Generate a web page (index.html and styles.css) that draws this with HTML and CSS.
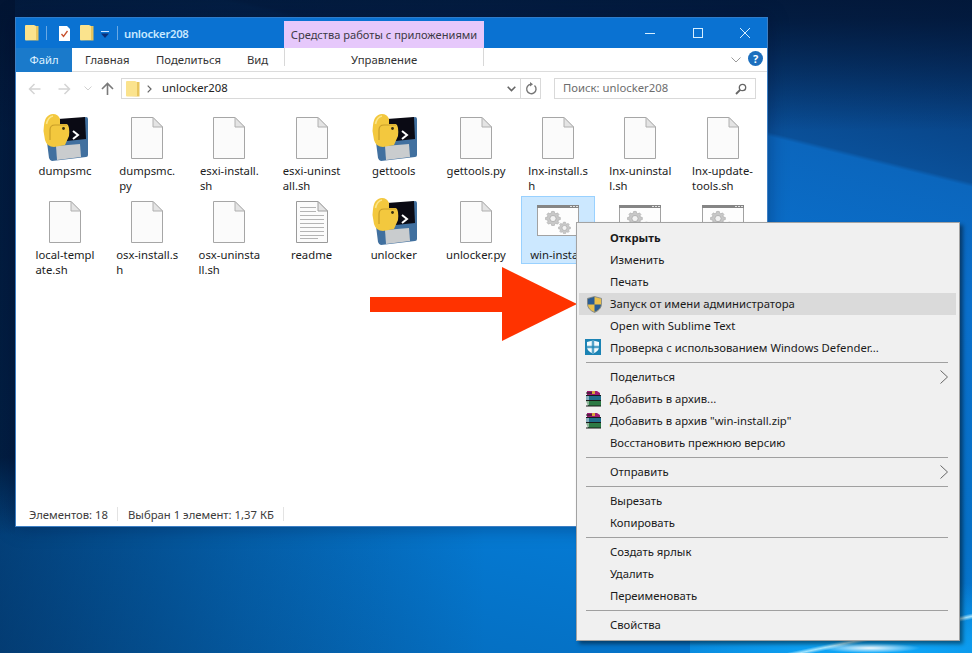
FILE: index.html
```html
<!DOCTYPE html>
<html lang="ru">
<head>
<meta charset="utf-8">
<title>unlocker208</title>
<link rel="stylesheet" href="styles.css">
</head>
<body>
<svg class="defs" width="0" height="0">
  <defs>
    <symbol id="doc" viewBox="0 0 32 42">
      <path d="M.5.5H22L31.5 10V41.5H.5Z" fill="#fbfbfb" stroke="#a6a6a6"/>
      <path d="M22 .5V10H31.5Z" fill="#e4e4e4" stroke="#b0b0b0" stroke-linejoin="round"/>
    </symbol>
    <symbol id="txt" viewBox="0 0 32 42">
      <path d="M.5.5H22L31.5 10V41.5H.5Z" fill="#fbfbfb" stroke="#9a9a9a"/>
      <path d="M22 .5V10H31.5Z" fill="#e4e4e4" stroke="#a0a0a0"/>
      <path d="M4 6.5H20M4 10.5H20M4 14.5H28M4 18.5H28M4 22.5H28M4 26.5H28M4 30.5H28M4 34.5H28M4 37.5H22" stroke="#b4b4b4"/>
    </symbol>
    <symbol id="py" viewBox="0 0 46 47">
      <path d="M3 12L44 3Q46 3 46 5L46 41Q46 43 44 43L10 47Q8 47 7 44Z" fill="#41709f"/>
      <path d="M16 5L43 3 44 25 15 28Z" fill="#0a0a14"/>
      <path d="M14 32L38 30 39 43 15 46Z" fill="#c9ccce"/>
      <path d="M1.500 17Q2 7 4 4 7 0 11 0 16 0 18 5L18 10 25 10Q28 12 27 22L23 31 12 33Q5 33 3 26Z" fill="#f3c83e"/>
      <path d="M8 26V16Q8 11 13 11H25" fill="none" stroke="#c99e28" stroke-width="1.200"/>
      <path d="M4.500 10Q6 3 11 2" fill="none" stroke="#fbe58a" stroke-width="1.600"/>
      <circle cx="21.500" cy="14.500" r="1.400" fill="#3a3010"/>
      <path d="M31 17L36 21 31 25" fill="none" stroke="#fff" stroke-width="2"/>
    </symbol>
    <symbol id="gear" viewBox="0 0 24 24">
      <path d="M12 2l2 .3.6 2.6 1.8.8 2.3-1.4 2.2 2.3-1.4 2.2.7 1.8 2.8.6v3.2l-2.8.6-.7 1.8 1.4 2.2-2.2 2.3-2.3-1.4-1.8.8-.6 2.6h-4l-.6-2.6-1.8-.8-2.3 1.4-2.2-2.3 1.4-2.2-.7-1.8L.8 14.4v-3.2l2.8-.6.7-1.8L2.9 6.6l2.2-2.3 2.3 1.4 1.8-.8.6-2.6Z" fill="#c8c8c8" stroke="#a0a0a0" stroke-width=".8"/>
      <circle cx="12" cy="12.800" r="4.600" fill="#f2f2f2" stroke="#a0a0a0"/>
    </symbol>
    <symbol id="cmd" viewBox="0 0 42 31">
      <rect x=".5" y=".5" width="41" height="30" fill="#fdfdfd" stroke="#a2a2a2"/>
      <rect width="42" height="3" fill="#858585"/>
      <path d="M33 1h2v1h-2zM36 1h2v1h-2zM39 1h2v1h-2z" fill="#e2e2e2"/>
      <use href="#gear" x="8" y="5" width="16" height="16"/>
      <use href="#gear" x="21" y="16" width="13" height="13"/>
    </symbol>
    <symbol id="folder" viewBox="0 0 14 16">
      <path d="M0 1Q0 0 1 0H9L11 1V15L1 15.500Q0 15.500 0 14.500Z" fill="#fbe38d"/>
      <path d="M11 1H13.500V15.500H1L11 15Z" fill="#e8c55d"/>
    </symbol>
    <symbol id="rar" viewBox="0 0 17 17">
      <path d="M2 1H12L15 3 15 6H2Z" fill="#9c1a72"/>
      <path d="M1 6H16V11H1Z" fill="#1f6d8a"/>
      <path d="M1 11H16V16H3Z" fill="#2d7a45"/>
      <path d="M1 5.500H16M1 10.500H16M1 16H16M1 3H9" stroke="#1a1a1a" stroke-width="1"/>
      <path d="M7 1H10V4H7Z" fill="#d9a53a"/>
      <path d="M1 7H4M1 9H4M1 12H4M1 14H4" stroke="#eee"/>
    </symbol>
    <symbol id="chev" viewBox="0 0 8 14">
      <path d="M.5.5L7.500 7 .5 13.500" fill="none" stroke="#666"/>
    </symbol>
  </defs>
</svg>

<div class="glow"></div>

<section class="window">
  <header class="titlebar">
    <div class="quick">
      <svg class="qa-folder" width="14" height="16"><use href="#folder"/></svg>
      <span class="qa-sep"></span>
      <svg class="qa-check" width="13" height="15" viewBox="0 0 13 15"><path d="M1 0H9L12 3V15H1Z" fill="#fff"/><path d="M3.500 8L5.500 10.500 9.500 5" fill="none" stroke="#c8502c" stroke-width="1.300"/></svg>
      <svg class="qa-folder" width="14" height="16"><use href="#folder"/></svg>
      <svg class="qa-drop" width="8" height="7" viewBox="0 0 8 7"><path d="M0 0H8V1H0Z" fill="#cfe6ff"/><path d="M0 2.500H8L4 7Z" fill="#0b2f78"/></svg>
      <span class="qa-sep"></span>
      <span class="title">unlocker208</span>
    </div>
    <div class="context-tab">Средства работы с приложениями</div>
    <div class="controls">
      <svg width="12" height="12" viewBox="0 0 12 12"><path d="M1 6.500H11" stroke="#d7efff"/></svg>
      <svg width="12" height="12" viewBox="0 0 12 12"><rect x="1.500" y="1.500" width="9" height="9" fill="none" stroke="#d7efff"/></svg>
      <svg width="12" height="12" viewBox="0 0 12 12"><path d="M1 1L11 11M11 1L1 11" stroke="#d7efff"/></svg>
    </div>
  </header>

  <nav class="ribbon">
    <span class="tab tab-file">Файл</span>
    <span class="tab tab-home">Главная</span>
    <span class="tab tab-share">Поделиться</span>
    <span class="tab tab-view">Вид</span>
    <span class="tab tab-manage">Управление</span>
    <svg class="rib-chev" width="10" height="6" viewBox="0 0 10 6"><path d="M.5.5L5 5 9.500.5" fill="none" stroke="#9a9a9a"/></svg>
    <span class="help">?</span>
  </nav>

  <div class="navbar">
    <svg class="nav-ic" width="13" height="12" viewBox="0 0 13 12"><path d="M12.500 6H2M6.500 1L1.500 6 6.500 11" fill="none" stroke="#d4d4d4" stroke-width="1.500"/></svg>
    <svg class="nav-ic nav-fwd" width="13" height="12" viewBox="0 0 13 12"><path d="M.5 6H11M6.500 1L11.500 6 6.500 11" fill="none" stroke="#d4d4d4" stroke-width="1.500"/></svg>
    <svg class="nav-ic nav-down" width="8" height="5" viewBox="0 0 8 5"><path d="M.5.5L4 4 7.500.5" fill="none" stroke="#d0d0d0"/></svg>
    <svg class="nav-ic nav-up" width="13" height="13" viewBox="0 0 13 13"><path d="M6.500 13V2M1 7L6.500 1.500 12 7" fill="none" stroke="#7a7a7a" stroke-width="1.600"/></svg>
    <div class="address">
      <svg class="addr-folder" width="14" height="16"><use href="#folder"/></svg>
      <svg class="addr-chev" width="5" height="8" viewBox="0 0 5 8"><path d="M.7.7L4 4 .7 7.300" fill="none" stroke="#666" stroke-width="1.200"/></svg>
      <span class="addr-text">unlocker208</span>
      <svg class="addr-down" width="9" height="6" viewBox="0 0 9 6"><path d="M.7.7L4.500 4.500 8.300.7" fill="none" stroke="#666" stroke-width="1.600"/></svg>
      <span class="addr-refresh">
        <svg width="12" height="13" viewBox="0 0 12 13"><path d="M9.500 3.500A4.700 4.700 0 1 1 6 2.300" fill="none" stroke="#777" stroke-width="1.400"/><path d="M5 0L8 2.300 5 4.600Z" fill="#777"/></svg>
      </span>
    </div>
    <div class="search">
      <span class="search-text">Поиск: unlocker208</span>
      <svg width="12" height="12" viewBox="0 0 12 12"><circle cx="7.500" cy="4.500" r="3.200" fill="none" stroke="#666" stroke-width="1.300"/><path d="M5 7L1 11" stroke="#666" stroke-width="1.800"/></svg>
    </div>
  </div>

  <main class="files">
    <div class="file"><svg class="ic-py"><use href="#py"/></svg><span class="name">dumpsmc</span></div>
    <div class="file"><svg class="ic-doc"><use href="#doc"/></svg><span class="name">dumpsmc.<br>py</span></div>
    <div class="file"><svg class="ic-doc"><use href="#doc"/></svg><span class="name">esxi-install.<br>sh</span></div>
    <div class="file"><svg class="ic-doc"><use href="#doc"/></svg><span class="name">esxi-uninst<br>all.sh</span></div>
    <div class="file"><svg class="ic-py"><use href="#py"/></svg><span class="name">gettools</span></div>
    <div class="file"><svg class="ic-doc"><use href="#doc"/></svg><span class="name">gettools.py</span></div>
    <div class="file"><svg class="ic-doc"><use href="#doc"/></svg><span class="name">lnx-install.s<br>h</span></div>
    <div class="file"><svg class="ic-doc"><use href="#doc"/></svg><span class="name">lnx-uninstal<br>l.sh</span></div>
    <div class="file"><svg class="ic-doc"><use href="#doc"/></svg><span class="name">lnx-update-<br>tools.sh</span></div>
    <div class="file"><svg class="ic-doc"><use href="#doc"/></svg><span class="name">local-templ<br>ate.sh</span></div>
    <div class="file"><svg class="ic-doc"><use href="#doc"/></svg><span class="name">osx-install.s<br>h</span></div>
    <div class="file"><svg class="ic-doc"><use href="#doc"/></svg><span class="name">osx-uninsta<br>ll.sh</span></div>
    <div class="file"><svg class="ic-doc"><use href="#txt"/></svg><span class="name">readme</span></div>
    <div class="file"><svg class="ic-py"><use href="#py"/></svg><span class="name">unlocker</span></div>
    <div class="file"><svg class="ic-doc"><use href="#doc"/></svg><span class="name">unlocker.py</span></div>
    <div class="file selected"><svg class="ic-cmd"><use href="#cmd"/></svg><span class="name clipped">win-install</span></div>
    <div class="file"><svg class="ic-cmd"><use href="#cmd"/></svg></div>
    <div class="file"><svg class="ic-cmd"><use href="#cmd"/></svg></div>
  </main>

  <footer class="status">
    <span class="st-count">Элементов: 18</span>
    <span class="st-sep"></span>
    <span class="st-sel">Выбран 1 элемент: 1,37 КБ</span>
    <span class="st-sep"></span>
  </footer>
</section>

<div class="arrow">
  <span class="arrow-bar"></span>
  <span class="arrow-head"></span>
</div>

<div class="menu">
  <div class="item bold">Открыть</div>
  <div class="item">Изменить</div>
  <div class="item">Печать</div>
  <div class="item hover">
    <svg class="item-ic shield" width="15" height="17" viewBox="0 0 16 18"><path d="M8 .5L15.500 2.500V9Q15 14.500 8 17.500 1 14.500.5 9V2.500Z" fill="#e9c04e" stroke="#6f7a86" stroke-width=".8"/><path d="M8 .8V9H.9V2.800ZM8 9H15.100Q14.500 14.200 8 17.100Z" fill="#2a5c94"/></svg>
    Запуск от имени администратора
  </div>
  <div class="item">Open with Sublime Text</div>
  <div class="item">
    <svg class="item-ic" width="16" height="16" viewBox="0 0 16 16"><rect width="16" height="16" fill="#1b83b4"/><path d="M8 1.500L14 3V8Q14 12 8 14.800 2 12 2 8V3Z" fill="#f4fbfd"/><path d="M7.300 1.500V14.500M8.700 1.500V14.500M2 7.300H14M2 8.700H14" stroke="#1b83b4" stroke-width=".9"/></svg>
    Проверка с использованием Windows Defender...
  </div>
  <hr class="sep">
  <div class="item">Поделиться<svg class="sub" width="8" height="14"><use href="#chev"/></svg></div>
  <div class="item"><svg class="item-ic" width="17" height="17"><use href="#rar"/></svg>Добавить в архив...</div>
  <div class="item"><svg class="item-ic" width="17" height="17"><use href="#rar"/></svg>Добавить в архив "win-install.zip"</div>
  <div class="item">Восстановить прежнюю версию</div>
  <hr class="sep">
  <div class="item">Отправить<svg class="sub" width="8" height="14"><use href="#chev"/></svg></div>
  <hr class="sep">
  <div class="item">Вырезать</div>
  <div class="item">Копировать</div>
  <hr class="sep">
  <div class="item">Создать ярлык</div>
  <div class="item">Удалить</div>
  <div class="item">Переименовать</div>
  <hr class="sep">
  <div class="item">Свойства</div>
</div>
</body>
</html>
```
FILE: styles.css
```css
* { box-sizing: border-box; }
html, body { margin: 0; height: 100%; }
body {
  width: 972px;
  height: 653px;
  overflow: hidden;
  position: relative;
  font: 12px/15px "Noto Sans", "Open Sans", sans-serif;
  color: #1c1c1c;
  background:
    linear-gradient(180deg, rgba(2, 20, 50, .85) 0, rgba(2, 20, 50, .8) 18px, rgba(2, 20, 50, 0) 130px),
    linear-gradient(180deg, rgba(2, 20, 50, .85) 0, rgba(2, 20, 50, .8) 70%, rgba(2, 20, 50, 0) 82%) 0 0 / 15px 100% no-repeat,
    linear-gradient(90deg, rgba(2, 24, 60, .55) 0, rgba(2, 24, 60, .25) 25%, rgba(2, 24, 60, 0) 50%),
    linear-gradient(194deg, #052f68 0, #0a5099 20.4%, #0b66bd 20.9%, #0a6fcb 34%, #0670c6 60%, #0579d2 72%, #0568b6 100%);
}
.defs { position: absolute; }

.glow {
  position: absolute;
  left: 690px;
  top: 560px;
  width: 282px;
  height: 93px;
  background:
    radial-gradient(ellipse 50px 5px at 180px 88px, rgba(255, 255, 255, .95), rgba(150, 225, 255, 0)),
    linear-gradient(168deg, rgba(190, 240, 255, 0) 74%, rgba(190, 240, 255, .85) 76%, rgba(190, 240, 255, 0) 78%),
    radial-gradient(ellipse 320px 70px at 180px 90px, rgba(15, 170, 250, 1), rgba(15, 170, 250, 0));
}

/* Window */
.window {
  position: absolute;
  left: 15px;
  top: 17px;
  width: 753px;
  height: 510px;
  background: #fff;
  border: 1px solid #3d7fc4;
  border-top-color: #2f7dcb;
  box-shadow: 0 0 18px rgba(0, 10, 40, .35);
  display: flex;
  flex-direction: column;
}
.titlebar {
  height: 30px;
  flex: none;
  background: #0a72d2;
  display: flex;
  align-items: flex-end;
}
.quick {
  width: 268px;
  height: 30px;
  padding-left: 9px;
  display: flex;
  align-items: center;
}
.qa-sep { width: 1px; height: 14px; background: #6aa9e4; }
.quick .qa-sep:nth-of-type(1) { margin: 0 11px 0 7px; }
.qa-check { margin-right: 9px; }
.qa-drop { margin: 2px 8px 0 7px; }
.title { margin-left: 6px; color: #c7e8ff; font-size: 11.3px; font-weight: 600; letter-spacing: -.3px; }
.context-tab {
  width: 200px;
  height: 27px;
  background: #e6c8fb;
  color: #3d3a45;
  font-size: 11.1px;
  line-height: 27px;
  text-align: center;
  white-space: nowrap;
}
.controls {
  flex: 1;
  height: 30px;
  padding: 0 16px 0 160px;
  display: flex;
  align-items: center;
  justify-content: space-between;
}

.ribbon {
  height: 24px;
  flex: none;
  border-bottom: 1px solid #dcdcdc;
  display: flex;
  align-items: stretch;
  position: relative;
  font-size: 11.3px;
  color: #333;
}
.tab { line-height: 23px; white-space: nowrap; }
.tab-file { width: 56px; height: 24px; margin-bottom: -1px; background: #1a7acb; color: #dff1ff; text-align: center; }
.tab-home { margin-left: 13px; width: 71px; }
.tab-share { width: 91px; }
.tab-view { width: 37px; }
.tab-manage {
  width: 200px;
  text-align: center;
  height: 18px;
  border-left: 1px solid #d8d8d8;
  border-right: 1px solid #d8d8d8;
}
.rib-chev { margin: 9px 0 0 247px; }
.help {
  width: 15px;
  height: 15px;
  margin: 3px 0 0 7px;
  border-radius: 50%;
  background: #1c6fbe;
  color: #fff;
  font: 700 11px/15px "Noto Sans", sans-serif;
  text-align: center;
}

.navbar {
  height: 36px;
  flex: none;
  padding: 6px 11px 9px 12px;
  display: flex;
  align-items: center;
}
.nav-fwd { margin-left: 17px; }
.nav-down { margin-left: 13px; }
.nav-up { margin-left: 9px; }
.address {
  width: 420px;
  height: 21px;
  margin-left: 7px;
  border: 1px solid #d9d9d9;
  display: flex;
  align-items: center;
  padding-left: 4px;
}
.addr-chev { margin-left: 7px; }
.addr-text { margin-left: 10px; flex: 1; color: #222; font-size: 11.3px; padding-bottom: 2px; }
.addr-down { margin-right: 4px; }
.addr-refresh {
  width: 20px;
  height: 19px;
  border-left: 1px solid #d9d9d9;
  display: flex;
  align-items: center;
  justify-content: center;
}
.search {
  width: 202px;
  height: 21px;
  margin-left: 13px;
  border: 1px solid #d9d9d9;
  padding: 0 8px;
  display: flex;
  align-items: center;
  justify-content: space-between;
  color: #6d6d6d;
  font-size: 11.3px;
}
.search-text { padding-bottom: 2px; }

.files {
  flex: 1;
  padding: 4px 0 0 12px;
  display: grid;
  grid-template-columns: repeat(9, 74px);
  grid-auto-rows: 68px;
  column-gap: 8.2px;
  row-gap: 16px;
  align-content: start;
}
.file {
  border: 1px solid transparent;
  display: flex;
  flex-direction: column;
  align-items: center;
}
.file svg { flex: none; }
.ic-doc { width: 32px; height: 42px; margin: 4px 0 4px; }
.ic-py { width: 46px; height: 47px; margin: 1px 0 2px; }
.ic-cmd { width: 42px; height: 31px; margin: 8px 0 11px; }
.name { font-size: 11.3px; line-height: 15px; text-align: left; white-space: nowrap; }
.clipped { align-self: flex-start; width: 46px; margin-left: 8px; overflow: hidden; }
.selected { background: #cce8ff; border-color: #99d1ff; }

.status {
  height: 24px;
  flex: none;
  padding-left: 13px;
  display: flex;
  align-items: center;
  color: #3c3c3c;
  font-size: 11.3px;
}
.st-sep { width: 1px; height: 14px; background: #e3e3e3; }
.st-count { width: 88px; }
.st-sel { width: 155px; margin-left: 10px; }

/* Annotation arrow */
.arrow {
  position: absolute;
  left: 370px;
  top: 267px;
  display: flex;
  align-items: center;
}
.arrow-bar { width: 132px; height: 15px; background: #ff3300; }
.arrow-head {
  width: 0;
  height: 0;
  border-left: 75px solid #ff3300;
  border-top: 37.5px solid transparent;
  border-bottom: 37.5px solid transparent;
}

/* Context menu */
.menu {
  position: absolute;
  left: 576px;
  top: 222px;
  width: 384px;
  height: 419px;
  padding: 4px 3px 4px 2px;
  background: #f0f0f0;
  border: 1px solid #a3a3a3;
  box-shadow: 3px 3px 4px rgba(0, 0, 0, .45);
}
.item {
  height: 22px;
  padding-left: 31px;
  position: relative;
  line-height: 21px;
  font-size: 11.3px;
  color: #1a1a1a;
  white-space: nowrap;
}
.bold { font-weight: 700; }
.hover { background: #dadada; }
.item-ic { position: absolute; left: 6px; top: 2px; }
.shield { left: 8px; top: 3px; }
.sub { position: absolute; right: 8px; top: 4px; }
.sep { height: 1px; margin: 3px 8px 3px 7px; border: 0; background: #a0a0a0; }
```
